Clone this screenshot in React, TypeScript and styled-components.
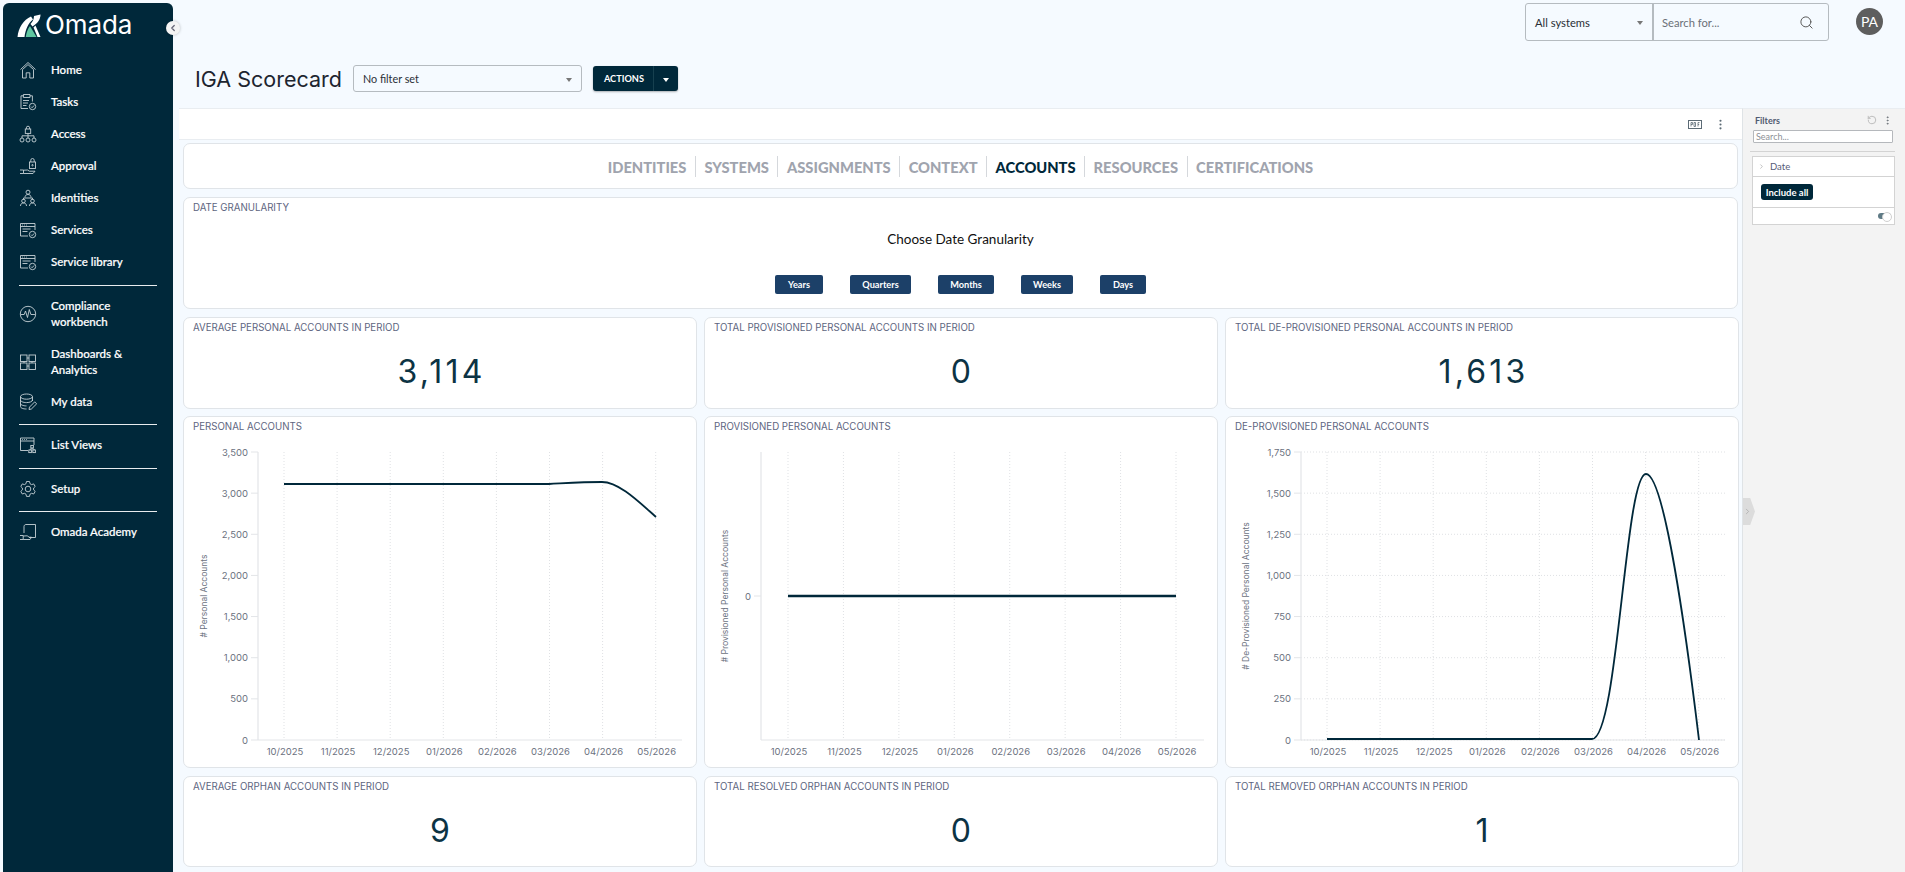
import React, { FC, ReactNode } from "react";
import styled, { createGlobalStyle } from "styled-components";
import { ChevronLeft, ChevronRight, RotateCcw, MoreVertical, Search } from "lucide-react";

const GlobalStyle = createGlobalStyle`
	html, body {
		margin: 0;
		padding: 0;
		height: 100%;
		overflow: hidden;
		background: #f5faff;
		font-family: "Lato", "Open Sans", sans-serif;
	}
	* {
		box-sizing: border-box;
	}
`;

const Page = styled.div`
	display: flex;
	height: 872px;
	overflow: hidden;
`;

const Sidebar = styled.aside`
	position: relative;
	flex: 0 0 170px;
	margin: 3px 0 0 3px;
	background: #00283a;
	border-radius: 6px 6px 0 0;
	color: #fff;
`;

const LogoRow = styled.div`
	display: flex;
	align-items: center;
	gap: 4px;
	height: 45px;
	margin-bottom: 6px;
	padding-left: 14px;
`;

const LogoText = styled.span`
	margin-top: -1px;
	font-family: "Inter", sans-serif;
	font-size: 26px;
	line-height: 26px;
	letter-spacing: -0.1px;
	color: #fff;
`;

const CollapseButton = styled.div`
	position: absolute;
	top: 18px;
	right: -7px;
	width: 14px;
	height: 14px;
	display: flex;
	align-items: center;
	justify-content: center;
	border-radius: 50%;
	background: #f4f4f4;
	color: #667;
	box-shadow: 0 0 3px rgba(0, 0, 0, 0.25);
`;

const NavRow = styled.div<{ $tall?: boolean }>`
	display: flex;
	align-items: center;
	gap: 14px;
	height: ${(props) => (props.$tall ? "48px" : "32px")};
	padding-left: 16px;
`;

const NavIconBox = styled.span`
	display: flex;
	flex: 0 0 18px;
	width: 18px;
	height: 18px;
	color: #c6d1d6;
`;

const NavLabel = styled.span`
	font-size: 11.5px;
	font-weight: 500;
	line-height: 16px;
	color: #fff;
	-webkit-text-stroke: 0.2px #fff;
`;

const NavDivider = styled.hr`
	margin: 6.5px 16px 4px 16px;
	height: 1px;
	border: none;
	background: #e8ecee;
`;

const Main = styled.main`
	flex: 1;
	display: flex;
	flex-direction: column;
	min-width: 0;
`;

const Header = styled.header`
	flex: 0 0 108px;
	padding: 3px 22px 0 22px;
`;

const TopRow = styled.div`
	display: flex;
	justify-content: flex-end;
	align-items: center;
	gap: 27px;
	height: 38px;
`;

const SearchGroup = styled.div`
	display: flex;
	width: 304px;
	height: 38px;
	border: 1px solid #b5bbc0;
	border-radius: 3px;
`;

const SystemSelect = styled.div`
	position: relative;
	display: flex;
	align-items: center;
	width: 128px;
	padding-left: 9px;
	border-right: 2px solid #b5bbc0;
	font-size: 11.2px;
	color: #2a2f36;
`;

const Caret = styled.span<{ $color?: string; $right?: number }>`
	position: absolute;
	right: ${(props) => props.$right ?? 9}px;
	top: 50%;
	margin-top: -1px;
	border-left: 3.5px solid transparent;
	border-right: 3.5px solid transparent;
	border-top: 4px solid ${(props) => props.$color ?? "#777"};
`;

const SearchBox = styled.div`
	flex: 1;
	display: flex;
	align-items: center;
	justify-content: space-between;
	padding: 0 14px 0 8px;
	font-size: 11.2px;
	color: #6b7078;
`;

const Avatar = styled.div`
	display: flex;
	align-items: center;
	justify-content: center;
	width: 27px;
	height: 27px;
	margin-top: -1px;
	border-radius: 50%;
	background: #5e5e5e;
	color: #fff;
	font-size: 14px;
`;

const TitleRow = styled.div`
	display: flex;
	align-items: center;
	margin-top: 24px;
	height: 27px;
`;

const PageTitle = styled.h1`
	margin: 0 11px 0 0;
	font-family: "Inter", sans-serif;
	font-size: 21.5px;
	font-weight: 400;
	color: #1d2530;
	white-space: nowrap;
`;

const FilterSelect = styled.div`
	position: relative;
	display: flex;
	align-items: center;
	width: 229px;
	height: 27px;
	padding-left: 9px;
	border: 1px solid #b5bbc0;
	border-radius: 3px;
	font-size: 10.8px;
	color: #2a2f36;
`;

const ActionsButton = styled.div`
	position: relative;
	display: flex;
	align-items: center;
	width: 85px;
	height: 25px;
	margin-left: 11px;
	padding-left: 11px;
	background: #00283a;
	border-radius: 3px;
	color: #fff;
	font-size: 9.2px;
	font-weight: 700;
	box-shadow: 0 1px 2px rgba(0, 0, 0, 0.3);

	&::after {
		content: "";
		position: absolute;
		right: 24px;
		top: 0;
		bottom: 0;
		width: 1px;
		background: #17404f;
	}
`;

const Workspace = styled.div`
	flex: 1;
	display: flex;
	min-height: 0;
	padding-left: 6px;
`;

const Content = styled.div`
	flex: 1;
	display: flex;
	flex-direction: column;
	min-width: 0;
`;

const Toolbar = styled.div`
	display: flex;
	align-items: center;
	justify-content: flex-end;
	gap: 12px;
	height: 32px;
	padding-right: 15px;
	background: #fff;
	border-top: 1px solid #e9edf1;
	border-bottom: 1px solid #e9edf1;
	color: #5c6b75;
`;

const Board = styled.div`
	display: flex;
	flex-direction: column;
	gap: 8px;
	padding: 3px 4px 0 4px;
`;

const Card = styled.section<{ $height: number }>`
	height: ${(props) => props.$height}px;
	background: #fff;
	border: 1px solid #e0e4e8;
	border-radius: 7px;
`;

const CardTitle = styled.div`
	height: 25px;
	padding: 4px 0 0 9px;
	font-family: "Inter", sans-serif;
	font-size: 9.7px;
	line-height: 12px;
	color: #5d6580;
	text-transform: uppercase;
	white-space: nowrap;
`;

const TabBar = styled(Card)`
	display: flex;
	align-items: center;
	justify-content: center;
	padding-top: 1px;
`;

const Tab = styled.div<{ $active?: boolean }>`
	display: flex;
	align-items: center;
	height: 21px;
	padding: 0 8.5px;
	border-left: 1px solid #d5d8dc;
	font-size: 14.7px;
	font-weight: 900;
	color: ${(props) => (props.$active ? "#00283a" : "#a0a4ae")};

	&:first-child {
		border-left: none;
	}
`;

const GranularityPrompt = styled.div`
	margin-top: 6px;
	text-align: center;
	font-size: 13.5px;
	line-height: 20px;
	color: #111;
`;

const GranularityButtons = styled.div`
	display: flex;
	justify-content: center;
	gap: 27px;
	margin-top: 26px;
`;

const GranularityButton = styled.div<{ $width: number }>`
	display: flex;
	align-items: center;
	justify-content: center;
	width: ${(props) => props.$width}px;
	height: 19px;
	background: #1c4068;
	border-radius: 2px;
	color: #fff;
	font-size: 9.2px;
	font-weight: 700;
`;

const CardGrid = styled.div`
	display: grid;
	grid-template-columns: repeat(3, 1fr);
	gap: 7.5px 7px;
`;

const MetricValue = styled.div`
	margin-top: 9px;
	padding-left: 3px;
	text-align: center;
	font-family: "Inter", sans-serif;
	font-size: 32px;
	line-height: 40px;
	letter-spacing: 3.2px;
	color: #0c3344;
`;

const ChartSvg = styled.svg`
	display: block;
	width: 512px;
	height: 325px;

	text {
		font-family: "Inter", sans-serif;
		font-size: 9.5px;
		fill: #6b7180;
	}
`;

const FiltersPanel = styled.aside`
	position: relative;
	flex: 0 0 162px;
	padding: 0 10px 0 7px;
	background: #f3f3f3;
	border-top: 1px solid #e9edf1;
	border-left: 1px solid #dfe3e6;
`;

const PanelHandle = styled.div`
	position: absolute;
	top: 389px;
	left: 0;
	width: 12px;
	height: 27px;
	display: flex;
	align-items: center;
	color: #a9a9a9;
	background: #dcdcdc;
	clip-path: polygon(0 0, 60% 0, 100% 50%, 60% 100%, 0 100%);
`;

const PanelHead = styled.div`
	display: flex;
	align-items: center;
	justify-content: space-between;
	height: 21px;
	padding: 1px 2px 0 5px;
	color: #8b8f94;
`;

const PanelTitle = styled.span`
	font-size: 9px;
	font-weight: 700;
	color: #505a70;
`;

const PanelActions = styled.span`
	display: flex;
	align-items: center;
	gap: 5px;
`;

const PanelSearch = styled.div`
	display: flex;
	align-items: center;
	width: 140px;
	height: 13px;
	margin-left: 3px;
	padding-left: 2px;
	background: #fff;
	border: 1px solid #b5b8bc;
	border-radius: 1px;
	font-size: 9px;
	color: #8d9197;
`;

const PanelDivider = styled.hr`
	height: 1px;
	margin: 8px 0 4px 0;
	border: none;
	background: #d3d3d3;
`;

const FilterCard = styled.div`
	width: 143px;
	margin-left: 2px;
	background: #fff;
	border: 1px solid #d3d3d3;
`;

const FilterHead = styled.div`
	display: flex;
	align-items: center;
	gap: 5px;
	height: 20px;
	padding-left: 5px;
	border-bottom: 1px solid #d3d3d3;
	font-size: 9.5px;
	color: #565c78;
`;

const FilterBody = styled.div`
	display: flex;
	align-items: flex-start;
	height: 31px;
	padding: 7px 0 0 8px;
	border-bottom: 1px solid #d3d3d3;
`;

const IncludeButton = styled.span`
	display: inline-flex;
	align-items: center;
	justify-content: center;
	width: 52px;
	height: 16px;
	background: #00283a;
	border-radius: 3px;
	color: #fff;
	font-size: 9.5px;
	font-weight: 700;
`;

const FilterFoot = styled.div`
	display: flex;
	align-items: center;
	justify-content: flex-end;
	height: 16px;
	padding-right: 3px;
`;

const ToggleTrack = styled.span`
	position: relative;
	width: 13px;
	height: 6px;
	background: #5f7a85;
	border-radius: 3px;

	&::after {
		content: "";
		position: absolute;
		right: -1px;
		top: -1px;
		width: 8px;
		height: 8px;
		background: #fff;
		border: 1px solid #d0d0d0;
		border-radius: 50%;
	}
`;

const Ico: FC<{ children: ReactNode }> = ({ children }) => (
	<NavIconBox>
		<svg width="18" height="18" viewBox="0 0 18 18" fill="none" stroke="currentColor" strokeWidth="0.9">
			{children}
		</svg>
	</NavIconBox>
);

const BadgeCheck = () => (
	<>
		<circle cx="13.5" cy="13.5" r="3.2" />
		<path d="M12 13.6l1.1 1.1 2-2.2" />
	</>
);

const WindowBox = () => (
	<>
		<path d="M9 15H1.5V2.5h14.5V9" />
		<path d="M1.5 5.5h14.5M3 4h.8M5 4h.8M7 4h.8M3.500 8h8M3.500 10.500h5" />
	</>
);

const navIcons: Record<string, ReactNode> = {
	home: (
		<path d="M1.500 8.500L9 1.500l7.500 7M3.500 8.500L9 3.600l5.500 4.900M3.500 8.500V17h3.700v-5.200h3.600V17h3.700V8.500" />
	),
	tasks: (
		<>
			<path d="M9 15.500H2V2.800h2.400M11 2.800h2.400V8.500M4.400 1.500h6.600v3H4.400zM4 7.500h6M4 10h5M4 12.500h3.500" />
			<BadgeCheck />
		</>
	),
	access: (
		<>
			<rect x="6.300" y="4" width="5.400" height="4.400" />
			<path d="M7.400 4V2.800a1.600 1.600 0 013.200 0V4M9 8.400v2.400M3 13v-2.200h12V13M9 10.800V13" />
			<circle cx="3" cy="15" r="2" />
			<circle cx="9" cy="15" r="2" />
			<circle cx="15" cy="15" r="2" />
		</>
	),
	approval: (
		<>
			<rect x="10.500" y="5" width="6" height="6.500" />
			<path d="M11.800 5V3.200a1.700 1.700 0 013.400 0V5M1 13h3.500v3.500H1M4.500 13.200l4-.2 2 1.200h5.500L14 16.500H4.500" />
			<circle cx="13.500" cy="8.200" r=".7" />
		</>
	),
	identities: (
		<>
			<circle cx="9" cy="3.200" r="2" />
			<path d="M6 8.500c0-2 1.200-3 3-3s3 1 3 3M4.500 10.800V9h9v1.800" />
			<circle cx="4.500" cy="12" r="1.800" />
			<circle cx="13.500" cy="12" r="1.800" />
			<path d="M1.500 17c0-2 1.200-3 3-3s3 1 3 3M10.500 17c0-2 1.200-3 3-3s3 1 3 3" />
		</>
	),
	services: (
		<>
			<WindowBox />
			<BadgeCheck />
		</>
	),
	compliance: (
		<>
			<circle cx="9" cy="9" r="7.700" />
			<path d="M2 9.500h3.200l1.300-3.500 2 6.500 1.800-8 1.600 5h4" />
		</>
	),
	dashboards: (
		<>
			<rect x="1.500" y="2" width="6.500" height="6.500" />
			<rect x="10" y="2" width="6.500" height="6.500" />
			<rect x="1.500" y="10" width="6.500" height="6.500" />
			<rect x="10" y="10" width="6.500" height="6.500" />
			<path d="M8 5h2M8 13h2M5 8.500v1.500M13 8.500v1.500" />
		</>
	),
	data: (
		<>
			<ellipse cx="7.500" cy="3.600" rx="6" ry="2.600" />
			<path d="M1.500 3.600v10c0 1.400 2.600 2.400 6 2.400M13.500 3.600V8M1.500 7c0 1.400 2.600 2.600 6 2.600s6-1.200 6-2.600M1.500 10.400c0 1.400 2.600 2.500 6 2.500" />
			<path d="M10 16.500l.5-2.400 5.200-5.200 2 1.900-5.300 5.200z" />
		</>
	),
	list: (
		<>
			<path d="M9 14.500H1.500V2h13.500v7M1.500 5h13.500M3 3.500h.8M5 3.500h.8M7 3.500h.8" />
			<rect x="11.800" y="9.500" width="2.600" height="2.400" />
			<rect x="9.800" y="14" width="2.600" height="2.600" />
			<rect x="13.800" y="14" width="2.600" height="2.600" />
			<path d="M13 11.900v1.100M11.100 14v-1h4v1" />
		</>
	),
	setup: (
		<>
			<circle cx="9" cy="9" r="2.800" />
			<path d="M7.500 1.500h3l.5 2.200 1.600.9 2.100-.7 1.500 2.600-1.600 1.500v1.900l1.600 1.500-1.500 2.600-2.100-.7-1.600.9-.5 2.200h-3l-.5-2.200-1.600-.9-2.100.7-1.500-2.600L3.400 9.900V8L1.800 6.500l1.500-2.600 2.100.7L7 3.700z" />
		</>
	),
	academy: (
		<>
			<path d="M5 10V3.500c0-1 .8-2 2-2h9.500v13H10" />
			<path d="M1 12.500h3.200v4H1M4.200 13l4-.2 2 1.400H12.500L11 16.500H4.200" />
		</>
	),
};

const LogoMark = () => (
	<svg width="24" height="24" viewBox="0 0 24 24">
		<path d="M0.500 23C1.500 13.500 6.500 6 14 2.500L16 5.500C11 9.500 8.500 15.500 7.500 23Z" fill="#fff" />
		<path d="M17 2L23.500 0.500C23.500 5.500 20.500 9.500 15.500 12.500L13.500 10C15.500 8 17 5 17 2Z" fill="#fff" />
		<path d="M18.500 11.500L23.500 23H20.500L16.500 13.500Z" fill="#fff" />
		<path d="M13 12L19.500 23H8.800C9.300 18.500 10.800 15 13 12Z" fill="#5fc6a0" />
	</svg>
);

type NavItem = { icon: string; lines: string[] };

const navGroups: NavItem[][] = [
	[
		{ icon: "home", lines: ["Home"] },
		{ icon: "tasks", lines: ["Tasks"] },
		{ icon: "access", lines: ["Access"] },
		{ icon: "approval", lines: ["Approval"] },
		{ icon: "identities", lines: ["Identities"] },
		{ icon: "services", lines: ["Services"] },
		{ icon: "services", lines: ["Service library"] },
	],
	[
		{ icon: "compliance", lines: ["Compliance", "workbench"] },
		{ icon: "dashboards", lines: ["Dashboards &", "Analytics"] },
		{ icon: "data", lines: ["My data"] },
	],
	[{ icon: "list", lines: ["List Views"] }],
	[{ icon: "setup", lines: ["Setup"] }],
	[{ icon: "academy", lines: ["Omada Academy"] }],
];

const tabs = ["Identities", "Systems", "Assignments", "Context", "Accounts", "Resources", "Certifications"];

const granularities = [
	{ label: "Years", width: 48 },
	{ label: "Quarters", width: 61 },
	{ label: "Months", width: 56 },
	{ label: "Weeks", width: 52 },
	{ label: "Days", width: 46 },
];

const months = ["10/2025", "11/2025", "12/2025", "01/2026", "02/2026", "03/2026", "04/2026", "05/2026"];

type ChartProps = {
	axisX: number;
	firstX: number;
	stepX: number;
	right: number;
	yTitle: string;
	yTicks: { label: string; y: number }[];
	horizontalGrid?: boolean;
	line: string;
	lineWidth?: number;
};

const TOP = 10;
const BOTTOM = 298;

const LineChart: FC<ChartProps> = ({ axisX, firstX, stepX, right, yTitle, yTicks, horizontalGrid, line, lineWidth = 1.8 }) => (
	<ChartSvg viewBox="0 0 512 325">
		{months.map((_, i) => {
			const x = firstX + stepX * i;
			return <line key={i} x1={x} x2={x} y1={TOP} y2={BOTTOM} stroke="#dfe1e4" strokeDasharray="1 2" />;
		})}
		{horizontalGrid &&
			yTicks.map((t) => (
				<line key={t.label} x1={axisX} x2={right} y1={t.y} y2={t.y} stroke="#dfe1e4" strokeDasharray="1 2" />
			))}
		<line x1={axisX} x2={axisX} y1={TOP} y2={BOTTOM} stroke="#e8eaed" strokeWidth="1.5" />
		<line x1={axisX} x2={right} y1={BOTTOM} y2={BOTTOM} stroke="#e3e5e8" strokeWidth="1" />
		{yTicks.map((t) => (
			<g key={t.label}>
				<line x1={axisX - 7} x2={axisX} y1={t.y} y2={t.y} stroke="#e3e5e8" />
				<text x={axisX - 10} y={t.y + 3.5} textAnchor="end">
					{t.label}
				</text>
			</g>
		))}
		{months.map((m, i) => (
			<text key={m} x={firstX + stepX * i + 1} y={313} textAnchor="middle">
				{m}
			</text>
		))}
		<text transform="translate(23 154) rotate(-90)" textAnchor="middle" style={{ fontSize: 8.5 }}>
			{yTitle}
		</text>
		<path d={line} fill="none" stroke="#00283a" strokeWidth={lineWidth} />
	</ChartSvg>
);

const stepTicks = (labels: string[]) =>
	labels.map((label, i) => ({ label, y: BOTTOM - ((BOTTOM - TOP) / (labels.length - 1)) * i }));

const MetricCard: FC<{ title: string; value: string }> = ({ title, value }) => (
	<Card $height={91.5}>
		<CardTitle>{title}</CardTitle>
		<MetricValue>{value}</MetricValue>
	</Card>
);

const App: FC = () => (
	<Page>
		<GlobalStyle />
		<Sidebar>
			<LogoRow>
				<LogoMark />
				<LogoText>Omada</LogoText>
			</LogoRow>
			<CollapseButton>
				<ChevronLeft size={10} strokeWidth={3} />
			</CollapseButton>
			{navGroups.map((group, g) => (
				<React.Fragment key={g}>
					{g > 0 && <NavDivider />}
					{group.map((item) => (
						<NavRow key={item.lines[0]} $tall={item.lines.length > 1}>
							<Ico>{navIcons[item.icon]}</Ico>
							<NavLabel>
								{item.lines.map((l, i) => (
									<React.Fragment key={l}>
										{i > 0 && <br />}
										{l}
									</React.Fragment>
								))}
							</NavLabel>
						</NavRow>
					))}
				</React.Fragment>
			))}
		</Sidebar>
		<Main>
			<Header>
				<TopRow>
					<SearchGroup>
						<SystemSelect>
							All systems
							<Caret />
						</SystemSelect>
						<SearchBox>
							Search for...
							<Search size={15} strokeWidth={1.6} color="#5a5a5a" />
						</SearchBox>
					</SearchGroup>
					<Avatar>PA</Avatar>
				</TopRow>
				<TitleRow>
					<PageTitle>IGA Scorecard</PageTitle>
					<FilterSelect>
						No filter set
						<Caret $right={9} />
					</FilterSelect>
					<ActionsButton>
						ACTIONS
						<Caret $color="#fff" $right={9} />
					</ActionsButton>
				</TitleRow>
			</Header>
			<Workspace>
				<Content>
					<Toolbar>
						<svg width="14" height="9" viewBox="0 0 14 9" fill="none" stroke="currentColor">
							<rect x="0.500" y="0.500" width="13" height="8" />
							<path d="M3 6.500V2.500h1.500v2H3M6 2.500v4h1.500V2.500zM10 6.500v-4h1.500M10 4.500h1.200" strokeWidth="0.8" />
						</svg>
						<MoreVertical size={13} />
					</Toolbar>
					<Board>
						<TabBar $height={46}>
							{tabs.map((t) => (
								<Tab key={t} $active={t === "Accounts"}>
									{t.toUpperCase()}
								</Tab>
							))}
						</TabBar>
						<Card $height={112}>
							<CardTitle>Date Granularity</CardTitle>
							<GranularityPrompt>Choose Date Granularity</GranularityPrompt>
							<GranularityButtons>
								{granularities.map((b) => (
									<GranularityButton key={b.label} $width={b.width}>
										{b.label}
									</GranularityButton>
								))}
							</GranularityButtons>
						</Card>
						<CardGrid>
							<MetricCard title="Average personal accounts in period" value="3,114" />
							<MetricCard title="Total provisioned personal accounts in period" value="0" />
							<MetricCard title="Total de-provisioned personal accounts in period" value="1,613" />
							<Card $height={352}>
								<CardTitle>Personal accounts</CardTitle>
								<LineChart
									axisX={74}
									firstX={100}
									stepX={53.1}
									right={498}
									yTitle="# Personal Accounts"
									yTicks={stepTicks(["0", "500", "1,000", "1,500", "2,000", "2,500", "3,000", "3,500"])}
									line="M100 42H365C385 41 400 40 418 40C435 40 455 60 472 75"
								/>
							</Card>
							<Card $height={352}>
								<CardTitle>Provisioned personal accounts</CardTitle>
								<LineChart
									axisX={56}
									firstX={83}
									stepX={55.43}
									right={499}
									yTitle="# Provisioned Personal Accounts"
									yTicks={[{ label: "0", y: 154 }]}
									line="M83 154H471"
									lineWidth={2.5}
								/>
							</Card>
							<Card $height={352}>
								<CardTitle>De-provisioned personal accounts</CardTitle>
								<LineChart
									axisX={75}
									firstX={101}
									stepX={53.1}
									right={499}
									yTitle="# De-Provisioned Personal Accounts"
									yTicks={stepTicks(["0", "250", "500", "750", "1,000", "1,250", "1,500", "1,750"])}
									horizontalGrid
									line="M101 297H366C392 297 399 32 420 32C438 32 460 190 473 298"
								/>
							</Card>
							<MetricCard title="Average orphan accounts in period" value="9" />
							<MetricCard title="Total resolved orphan accounts in period" value="0" />
							<MetricCard title="Total removed orphan accounts in period" value="1" />
						</CardGrid>
					</Board>
				</Content>
				<FiltersPanel>
					<PanelHandle>
						<ChevronRight size={9} strokeWidth={2} />
					</PanelHandle>
					<PanelHead>
						<PanelTitle>Filters</PanelTitle>
						<PanelActions>
							<RotateCcw size={10} color="#b3b3b3" />
							<MoreVertical size={11} color="#6c7278" />
						</PanelActions>
					</PanelHead>
					<PanelSearch>Search...</PanelSearch>
					<PanelDivider />
					<FilterCard>
						<FilterHead>
							<ChevronRight size={7} color="#999" />
							Date
						</FilterHead>
						<FilterBody>
							<IncludeButton>Include all</IncludeButton>
						</FilterBody>
						<FilterFoot>
							<ToggleTrack />
						</FilterFoot>
					</FilterCard>
				</FiltersPanel>
			</Workspace>
		</Main>
	</Page>
);

export default App;
